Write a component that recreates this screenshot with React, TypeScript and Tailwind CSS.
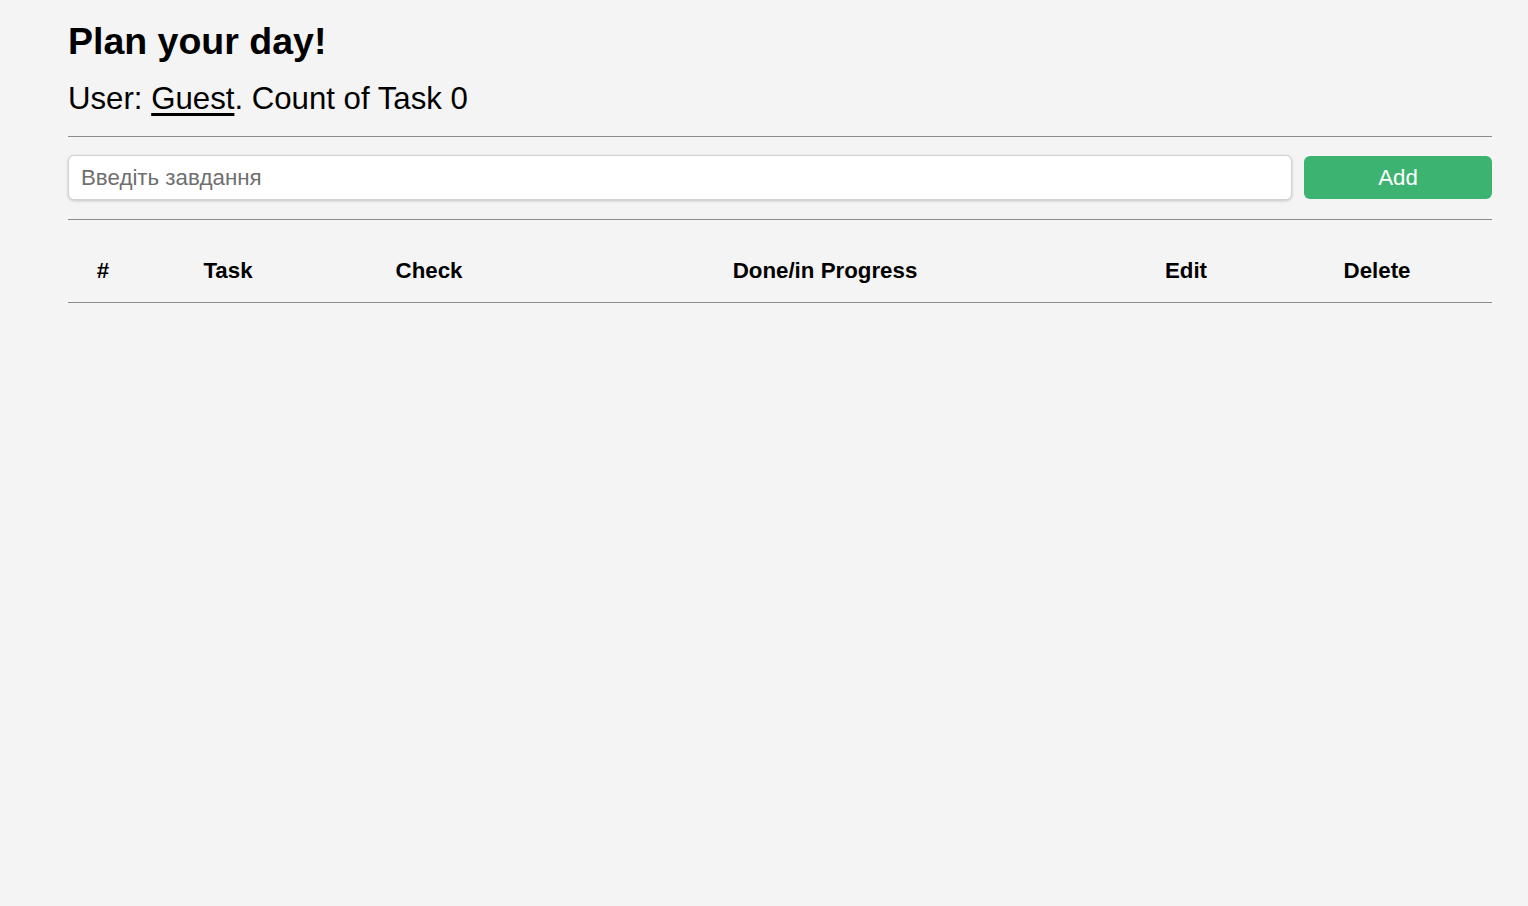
import { useState } from "react"

const columns = [
  { title: "#", width: "w-[70px]" },
  { title: "Task", width: "w-[180px]" },
  { title: "Check", width: "w-[222px]" },
  { title: "Done/in Progress", width: "w-[570px]" },
  { title: "Edit", width: "w-[152px]" },
  { title: "Delete", width: "w-[230px]" },
]

export default function App() {
  const [task, setTask] = useState("")
  const [tasks] = useState<string[]>([])

  return (
    <div className="min-h-screen bg-[#f4f4f4] font-['Liberation_Sans',Arial,sans-serif] text-black">
      <div className="ml-[68px] w-[1424px] pt-[19px]">
        <h1 className="text-[37.5px] leading-[44px] font-bold">Plan your day!</h1>
        <p className="mt-[18px] text-[31.2px] leading-[36px]">
          User: <span className="underline decoration-[3px] underline-offset-[4px]">Guest</span>. Count of Task {tasks.length}
        </p>
        <hr className="mt-[19px] border-t border-[#8c8c8c]" />
        <div className="flex gap-3 mt-[18px]">
          <input
            value={task}
            onChange={(e) => setTask(e.target.value)}
            placeholder="Введіть завдання"
            className="flex-1 h-[45px] rounded-md border border-[#d2d2d2] bg-white px-3 text-[22.3px] shadow-[0_1px_3px_rgba(0,0,0,0.2)] outline-none placeholder:text-[#6f6f6f]"
          />
          <button className="w-[188px] h-[43px] mt-px rounded-md bg-[#3cb371] text-white text-[22.3px]">
            Add
          </button>
        </div>
        <hr className="mt-[19px] border-t border-[#8c8c8c]" />
        <div className="flex border-b border-[#8c8c8c] pt-[38px] pb-[18px]">
          {columns.map((c) => (
            <div key={c.title} className={`${c.width} text-center text-[22.3px] leading-[26px] font-bold`}>
              {c.title}
            </div>
          ))}
        </div>
      </div>
    </div>
  )
}
